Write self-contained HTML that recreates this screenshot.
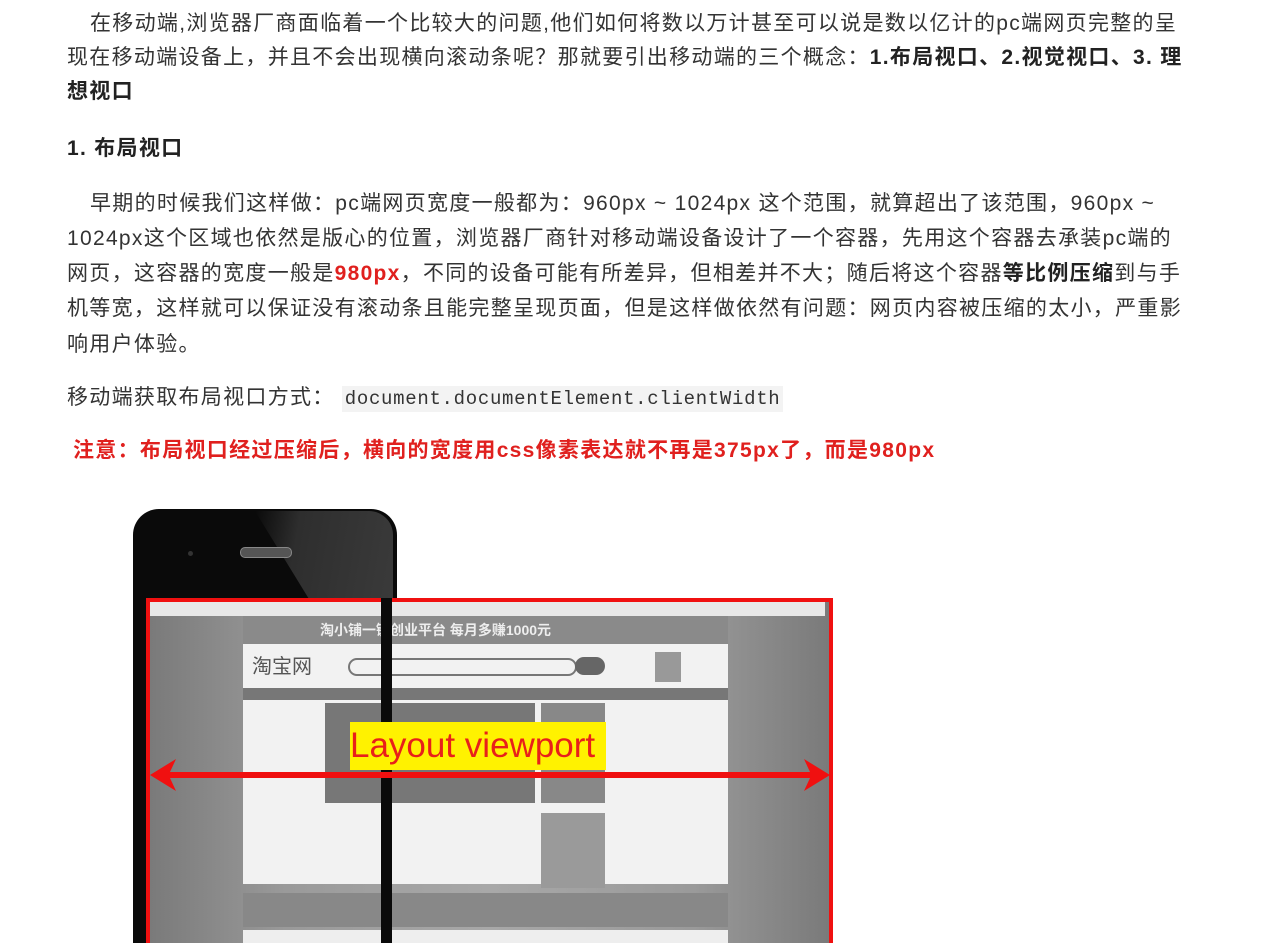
<!DOCTYPE html>
<html style="overflow:hidden"><head><meta charset="utf-8"><style>
html,body{margin:0;width:1280px;height:943px;overflow:hidden;background:#fff;font-family:"Liberation Sans","Noto Sans CJK SC",sans-serif;color:#333;}
body{position:relative}
.l{position:absolute;left:67px;font-size:21px;white-space:nowrap;line-height:24px;letter-spacing:1.3px}
b{color:#222}
.r{color:#e0201e;font-weight:bold}
.code{font-family:"Liberation Mono",monospace;font-size:19px;letter-spacing:0.7px;background:#f3f3f3;padding:2px 3px;color:#333}
.g{position:absolute}
</style></head><body>
<div class="l" style="top:12px;left:90px">在移动端,浏览器厂商面临着一个比较大的问题,他们如何将数以万计甚至可以说是数以亿计的pc端网页完整的呈</div>
<div class="l" style="top:46px">现在移动端设备上，并且不会出现横向滚动条呢？那就要引出移动端的三个概念：<b>1.布局视口、2.视觉视口、3. 理</b></div>
<div class="l" style="top:80px"><b>想视口</b></div>
<div class="l" style="top:137px"><b>1. 布局视口</b></div>
<div class="l" style="top:192px;left:90px">早期的时候我们这样做：pc端网页宽度一般都为：960px ~ 1024px 这个范围，就算超出了该范围，960px ~</div>
<div class="l" style="top:227px">1024px这个区域也依然是版心的位置，浏览器厂商针对移动端设备设计了一个容器，先用这个容器去承装pc端的</div>
<div class="l" style="top:262px">网页，这容器的宽度一般是<span class="r">980px</span>，不同的设备可能有所差异，但相差并不大；随后将这个容器<b>等比例压缩</b>到与手</div>
<div class="l" style="top:297px">机等宽，这样就可以保证没有滚动条且能完整呈现页面，但是这样做依然有问题：网页内容被压缩的太小，严重影</div>
<div class="l" style="top:333px">响用户体验。</div>
<div class="l" style="top:386px">移动端获取布局视口方式： <span class="code">document.documentElement.clientWidth</span></div>
<div class="l r" style="top:439px;left:73px">注意：布局视口经过压缩后，横向的宽度用css像素表达就不再是375px了，而是980px</div>

<div class="g" style="left:133px;top:509px;width:264px;height:434px;background:#0a0a0a;border-radius:26px 26px 0 0;overflow:hidden">
<div class="g" style="left:122px;top:2px;width:138px;height:90px;background:linear-gradient(100deg,#0a0a0a 0%,#2e2e2e 30%,#3a3a3a 100%);clip-path:polygon(0 0,100% 0,100% 100%,40% 100%);border-radius:0 24px 0 0"></div>
</div>
<div class="g" style="left:240px;top:547px;width:50px;height:9px;background:#555;border-radius:5px;border:1px solid #888"></div>
<div class="g" style="left:188px;top:551px;width:5px;height:5px;background:#333;border-radius:50%"></div>

<div class="g" style="left:146px;top:598px;width:679px;height:360px;background:linear-gradient(90deg,#7a7a7a,#9a9a9a 20%,#a8a8a8 50%,#9a9a9a 80%,#7a7a7a);border:4px solid #f01010"></div>
<div class="g" style="left:150px;top:602px;width:675px;height:14px;background:#e8e8e8"></div>
<div class="g" style="left:243px;top:616px;width:485px;height:28px;background:#8a8a8a"></div>
<div class="g" style="left:320px;top:620px;font-size:14px;font-weight:bold;color:#eee">淘小铺一键创业平台 每月多赚1000元</div>
<div class="g" style="left:243px;top:644px;width:485px;height:240px;background:#f2f2f2"></div>
<div class="g" style="left:252px;top:650px;font-size:20px;color:#555">淘宝网</div>
<div class="g" style="left:348px;top:658px;width:225px;height:14px;border:2px solid #777;border-radius:9px"></div>
<div class="g" style="left:575px;top:657px;width:30px;height:18px;background:#666;border-radius:9px"></div>
<div class="g" style="left:655px;top:652px;width:26px;height:30px;background:#999"></div>
<div class="g" style="left:243px;top:688px;width:485px;height:12px;background:#777"></div>
<div class="g" style="left:325px;top:703px;width:210px;height:100px;background:#777"></div>
<div class="g" style="left:541px;top:703px;width:64px;height:100px;background:#888"></div>
<div class="g" style="left:541px;top:813px;width:64px;height:75px;background:#9a9a9a"></div>
<div class="g" style="left:243px;top:893px;width:485px;height:34px;background:#888"></div>
<div class="g" style="left:243px;top:930px;width:485px;height:13px;background:#eee"></div>
<div class="g" style="left:133px;top:598px;width:13px;height:345px;background:#0a0a0a"></div>
<div class="g" style="left:381px;top:598px;width:11px;height:345px;background:#0a0a0a"></div>

<div class="g" style="left:350px;top:722px;width:256px;height:48px;background:#fff200"></div>
<div class="g" style="left:350px;top:722px;font-size:35px;line-height:48px;color:#e8201a;font-family:'Liberation Sans',sans-serif">Layout viewport</div>
<svg class="g" style="left:148px;top:755px" width="684" height="40"><path d="M2 20 L28 4 L22 17 L662 17 L656 4 L682 20 L656 36 L662 23 L22 23 L28 36Z" fill="#f01010"/></svg>
</body></html>
